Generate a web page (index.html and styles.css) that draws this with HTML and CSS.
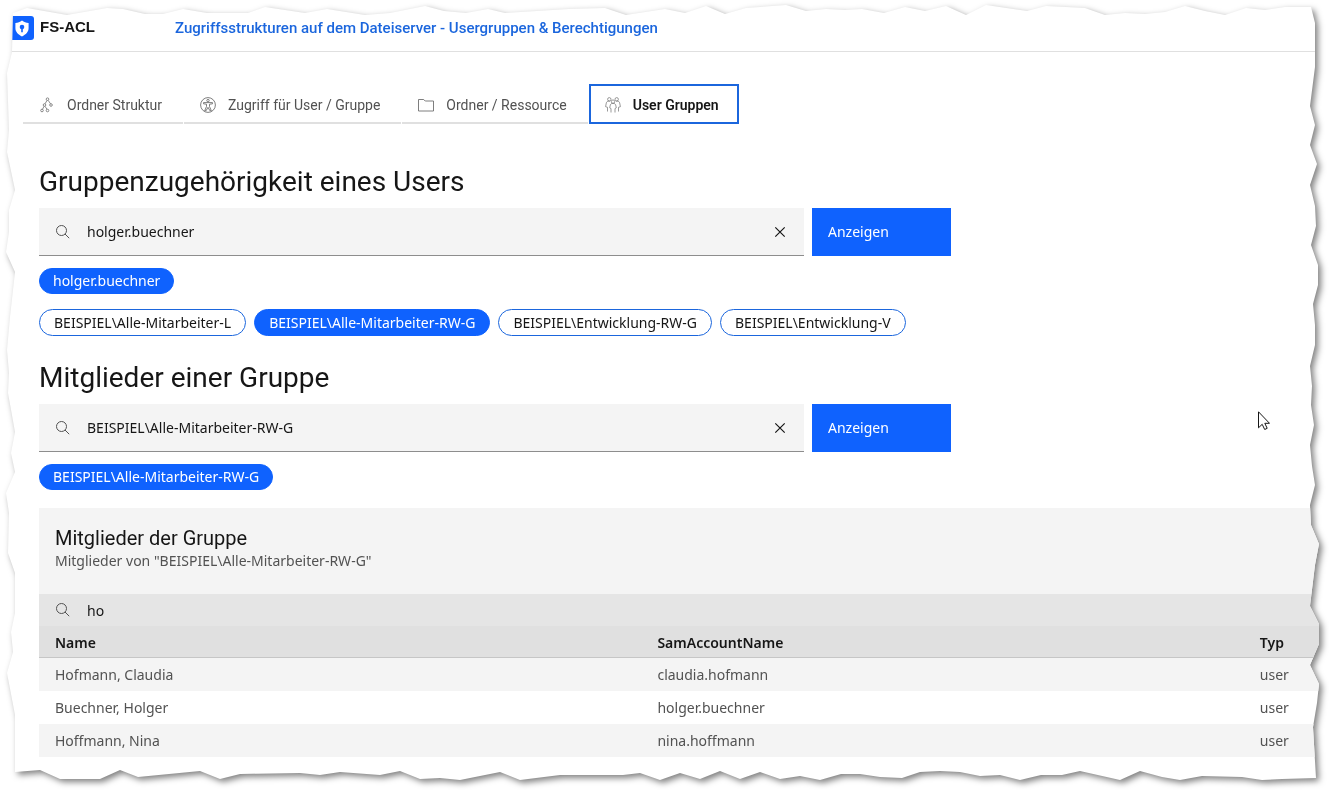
FILE: index.html
```
<!DOCTYPE html>
<html lang="de">
<head>
<meta charset="utf-8">
<title>FS-ACL</title>
<link rel="stylesheet" href="styles.css">
</head>
<body>
<div class="shadow">
<div class="sheet">
  <header class="topbar">
    <svg class="logo" viewBox="0 0 24 24" aria-hidden="true"><rect width="24" height="24" rx="3" fill="#0f62fe"/><path d="M12 4.500C10 6 8 6.700 5.400 6.900v5.200c0 3.800 2.600 6.600 6.600 8.400 4-1.800 6.600-4.600 6.600-8.400V6.900C16 6.700 14 6 12 4.500z" fill="#fff"/><circle cx="12" cy="11" r="2.300" fill="#0f62fe"/><path d="M11.200 11h1.600v5.200h-1.600z" fill="#0f62fe"/></svg>
    <span class="brand">FS-ACL</span>
    <a class="tagline" href="#">Zugriffsstrukturen auf dem Dateiserver - Usergruppen &amp; Berechtigungen</a>
  </header>
  <nav class="tabs">
    <button class="tab" type="button">
      <svg class="tab-icon" viewBox="0 0 16 16"><g fill="none" stroke="#6f6f6f" stroke-width=".8"><circle cx="8.500" cy="2.200" r="1.300"/><circle cx="5.500" cy="8" r="1.300"/><circle cx="12" cy="8" r="1.300"/><circle cx="3" cy="13.500" r="1.300"/><circle cx="8.500" cy="13.500" r="1.300"/><path d="M8 3.500 6 6.800M9.300 3.500l2.200 3.300M5 9.300l-1.500 3M6 9.300l2 3"/></g></svg>
      Ordner Struktur</button>
    <button class="tab" type="button">
      <svg class="tab-icon" viewBox="0 0 16 16"><g fill="none" stroke="#6f6f6f" stroke-width=".9"><circle cx="8" cy="8" r="7.400"/><circle cx="8" cy="3.600" r="1.200"/><path d="M3.500 5.600h9v1.200l-3 .4v2.300l1.800 4.200h-1.400L8 10.300l-1.900 3.400H4.700l1.800-4.200V7.200l-3-.4z"/></g></svg>
      Zugriff für User / Gruppe</button>
    <button class="tab" type="button">
      <svg class="tab-icon" viewBox="0 0 16 16"><path d="M.500 2.500h5.200l1.500 1.500h8.300v10H.500z" fill="none" stroke="#6f6f6f" stroke-width=".9"/></svg>
      Ordner / Ressource</button>
    <button class="tab tab-active" type="button">
      <svg class="tab-icon" viewBox="0 0 16 16"><g fill="none" stroke="#6f6f6f" stroke-width=".7"><circle cx="4.300" cy="2.300" r="1.700"/><circle cx="11.700" cy="2.300" r="1.700"/><circle cx="8" cy="4.600" r="1.700"/><path d="M6 15.500v-4L4.700 10.800 5.300 8c.3-1 1-1.500 2-1.500h1.400c1 0 1.700.5 2 1.500l.6 2.800-1.300.7v4M2.500 14.500v-4.200L.600 9.700 1.300 6c.3-1.200 1-1.800 2-1.800h1.500M13.500 14.500v-4.200l1.900-.6L14.700 6c-.3-1.200-1-1.800-2-1.800h-1.500"/></g></svg>
      User Gruppen</button>
  </nav>
  <main class="content">
    <section class="block">
      <h2 class="heading">Gruppenzugehörigkeit eines Users</h2>
      <form class="query">
        <div class="search">
          <svg class="glass" viewBox="0 0 16 16"><path d="M10 10 14.200 14.200" stroke="#525252"/><circle cx="6.500" cy="6.500" r="5" fill="none" stroke="#525252"/></svg>
          <input class="field" type="text" aria-label="User" value="holger.buechner">
          <button class="clear" type="button" aria-label="User löschen"><svg class="cross" viewBox="0 0 16 16"><path d="m3.300 3.300 9.400 9.400m0-9.400-9.400 9.400" stroke="#161616" stroke-width="1.200"/></svg></button>
        </div>
        <button class="submit" type="button">Anzeigen</button>
      </form>
      <div class="tags"><button class="tag tag-on" type="button">holger.buechner</button></div>
      <div class="tags tags-groups">
        <button class="tag" type="button">BEISPIEL\Alle-Mitarbeiter-L</button>
        <button class="tag tag-on" type="button">BEISPIEL\Alle-Mitarbeiter-RW-G</button>
        <button class="tag" type="button">BEISPIEL\Entwicklung-RW-G</button>
        <button class="tag" type="button">BEISPIEL\Entwicklung-V</button>
      </div>
    </section>
    <section class="block">
      <h2 class="heading">Mitglieder einer Gruppe</h2>
      <form class="query">
        <div class="search">
          <svg class="glass" viewBox="0 0 16 16"><path d="M10 10 14.200 14.200" stroke="#525252"/><circle cx="6.500" cy="6.500" r="5" fill="none" stroke="#525252"/></svg>
          <input class="field" type="text" aria-label="Gruppe" value="BEISPIEL\Alle-Mitarbeiter-RW-G">
          <button class="clear" type="button" aria-label="Gruppe löschen"><svg class="cross" viewBox="0 0 16 16"><path d="m3.300 3.300 9.400 9.400m0-9.400-9.400 9.400" stroke="#161616" stroke-width="1.200"/></svg></button>
        </div>
        <button class="submit" type="button">Anzeigen</button>
      </form>
      <div class="tags"><button class="tag tag-on" type="button">BEISPIEL\Alle-Mitarbeiter-RW-G</button></div>
    </section>
    <section class="members">
      <div class="members-head">
        <h3 class="members-title">Mitglieder der Gruppe</h3>
        <p class="members-note">Mitglieder von "BEISPIEL\Alle-Mitarbeiter-RW-G"</p>
      </div>
      <div class="search search-small">
        <svg class="glass" viewBox="0 0 16 16"><path d="M10 10 14.200 14.200" stroke="#525252"/><circle cx="6.500" cy="6.500" r="5" fill="none" stroke="#525252"/></svg>
        <input class="field" type="text" aria-label="Filter" value="ho">
      </div>
      <table class="grid">
        <thead><tr><th class="col-wide">Name</th><th class="col-wide">SamAccountName</th><th>Typ</th></tr></thead>
        <tbody>
          <tr><td>Hofmann, Claudia</td><td>claudia.hofmann</td><td>user</td></tr>
          <tr><td>Buechner, Holger</td><td>holger.buechner</td><td>user</td></tr>
          <tr><td>Hoffmann, Nina</td><td>nina.hoffmann</td><td>user</td></tr>
        </tbody>
      </table>
    </section>
  </main>
</div>
<svg class="pointer" viewBox="0 0 12 19"><path d="M.500.800v16l3.700-3.500 2.500 5.200 2.500-1.200-2.400-5h4.700z" fill="#fff" stroke="#161616"/></svg>
</div>
</body>
</html>
```
FILE: styles.css
```
* { box-sizing: border-box; }
body {
  margin: 0;
  background: #fff;
  color: #161616;
  font: 14px/18px "Noto Sans", "Open Sans", sans-serif;
}
button, input { font: inherit; color: inherit; border: 0; border-radius: 0; background: none; padding: 0; margin: 0; }
.shadow { position: relative; filter: drop-shadow(3px 3px 3px rgba(0, 0, 0, .5)); }
.sheet {
  min-height: 100vh;
  background: #fff;
  clip-path: polygon(
    13px 13px, 27px 8px, 67px 15px, 107px 8px, 123px 9px, 145px 14px, 163px 14px, 183px 9px, 207px 13px, 248px 13px, 265px 7px, 305px 13px, 327px 9px, 365px 15px, 390px 13px,
    425px 6px, 444px 11px, 466px 13px, 488px 9px, 505px 13px, 569px 9px, 605px 8px, 626px 15px, 665px 9px, 685px 13px, 706px 6px, 725px 14px, 746px 8px, 786px 5px, 806px 11px, 826px 9px, 845px 10px, 862px 9px, 884px 13px, 905px 7px, 925px 11px, 946px 6px, 966px 15px, 986px 5px, 1027px 11px, 1046px 6px, 1085px 8px, 1105px 15px, 1125px 13px, 1145px 14px, 1165px 12px, 1185px 6px, 1205px 11px, 1225px 15px,
    1246px 8px, 1265px 10px, 1285px 7px, calc(100% - 18px) 7px,
    calc(100% - 14px) 23px, calc(100% - 14px) 67px, calc(100% - 19px) 106px, calc(100% - 14px) 125px, calc(100% - 19px) 145px, calc(100% - 12px) 164px, calc(100% - 19px) 185px, calc(100% - 14px) 206px, calc(100% - 13px) 226px, calc(100% - 18px) 245px, calc(100% - 11px) 265px, calc(100% - 11px) 285px, calc(100% - 16px) 304px, calc(100% - 14px) 325px, calc(100% - 14px) 345px, calc(100% - 19px) 366px, calc(100% - 17px) 386px, calc(100% - 18px) 405px, calc(100% - 15px) 425px, calc(100% - 19px) 445px, calc(100% - 17px) 466px, calc(100% - 14px) 485px, calc(100% - 19px) 505px, calc(100% - 18px) 525px, calc(100% - 10px) 544px, calc(100% - 14px) 565px, calc(100% - 19px) 606px, calc(100% - 10px) 624px, calc(100% - 10px) 644px, calc(100% - 19px) 665px, calc(100% - 10px) 684px, calc(100% - 12px) 703px, calc(100% - 16px) 727px,
    calc(100% - 13px) calc(100% - 12px), 1282px calc(100% - 11px), 1262px calc(100% - 10px), 1242px calc(100% - 13px), 1202px calc(100% - 14px), 1180px calc(100% - 10px), 1162px calc(100% - 13px), 1140px calc(100% - 19px), 1120px calc(100% - 10px), 1080px calc(100% - 19px), 1062px calc(100% - 15px), 1041px calc(100% - 15px), 1020px calc(100% - 10px), 1000px calc(100% - 15px), 980px calc(100% - 14px), 960px calc(100% - 18px), 940px calc(100% - 19px), 920px calc(100% - 18px), 902px calc(100% - 12px), 880px calc(100% - 13px), 860px calc(100% - 16px), 841px calc(100% - 16px), 820px calc(100% - 10px), 800px calc(100% - 14px), 780px calc(100% - 11px), 760px calc(100% - 18px), 740px calc(100% - 11px), 720px calc(100% - 19px), 700px calc(100% - 11px), 680px calc(100% - 17px), 660px calc(100% - 10px), 640px calc(100% - 17px), 623px calc(100% - 15px), 560px calc(100% - 15px), 520px calc(100% - 10px), 500px calc(100% - 18px), 460px calc(100% - 10px), 440px calc(100% - 12px), 420px calc(100% - 11px), 400px calc(100% - 19px), 380px calc(100% - 15px), 340px calc(100% - 18px), 320px calc(100% - 15px), 300px calc(100% - 17px), 240px calc(100% - 16px), 220px calc(100% - 11px), 200px calc(100% - 19px), 138px calc(100% - 13px), 120px calc(100% - 20px), 100px calc(100% - 11px), 60px calc(100% - 11px), 40px calc(100% - 20px), 15px calc(100% - 18px),
    15px 715px, 7px 673px, 13px 652px, 11px 632px, 15px 613px, 15px 573px, 8px 553px, 9px 513px, 6px 493px, 15px 472px, 11px 453px, 15px 432px, 8px 393px, 9px 373px, 7px 350px, 10px 317px, 15px 272px, 6px 252px, 9px 232px, 9px 210px, 15px 190px, 7px 152px, 9px 130px, 7px 73px, 12px 52px
  );
}
.topbar { display: flex; align-items: center; height: 52px; padding: 4px 0 0 10px; border-bottom: 1px solid #e0e0e0; }
.logo { width: 24px; height: 24px; }
.brand { width: 135px; margin-left: 6px; padding-bottom: 2px; font: bold 15px/18px "Liberation Sans", sans-serif; }
.tagline { color: #1b66dd; font-family: Roboto, sans-serif; font-size: 15px; font-weight: 500; text-decoration: none; }
.tabs { display: flex; gap: 1px; padding: 32px 23px 0; font-family: Roboto, sans-serif; }
.tab { display: flex; align-items: center; gap: 12px; height: 40px; padding: 3px 21px 0 16px; border-bottom: 2px solid #e0e0e0; color: #525252; }
.tab-icon { width: 16px; height: 16px; }
.tab-active { padding: 1px 18px 0 14px; border: 2px solid #1b66dd; color: #161616; font-weight: 600; }
.content { padding: 40px 0 0 39px; }
.block { margin-bottom: 24px; }
.block:nth-of-type(2) { margin-bottom: 18px; }
.heading { margin: 0 0 8px; font-family: Roboto, sans-serif; font-size: 28px; font-weight: 400; line-height: 36px; }
.query { display: grid; grid-template-columns: 1fr 139px; gap: 8px; max-width: 912px; }
.search { display: flex; align-items: center; height: 48px; padding: 0 16px; background: #f4f4f4; border-bottom: 1px solid #8d8d8d; }
.glass, .cross { display: block; width: 16px; height: 16px; }
.field { flex: 1; height: 30px; min-width: 0; margin-left: 16px; outline: 0; }
.submit { padding-left: 16px; background: #0f62fe; color: #fff; text-align: left; }
.tags { display: flex; flex-wrap: wrap; gap: 8px; margin-top: 12px; }
.tags-groups { margin-top: 15px; }
.tag { height: 26px; padding: 0 13px; border: 1px solid #1b66dd; border-radius: 14px; color: #161616; }
.tags-groups .tag { height: 27px; padding: 0 14px; }
.tag-on, .tags-groups .tag-on { background: #0f62fe; border-color: #0f62fe; color: #fff; }
.members-head { height: 86px; padding: 16px 16px 0; background: #f4f4f4; }
.members-title { margin: 0; font-family: Roboto, sans-serif; font-size: 20px; font-weight: 400; line-height: 28px; }
.members-note { margin: 0; color: #525252; }
.search-small { height: 32px; background: #e5e5e5; border: 0; }
.grid { width: 100%; table-layout: fixed; border-spacing: 0; }
.grid th, .grid td { height: 33px; padding: 0 0 0 16px; text-align: left; }
.grid th { height: 32px; padding-top: 2px; background: #e0e0e0; border-bottom: 1px solid #c6c6c6; font-weight: 600; }
.grid td { color: #525252; }
.grid tbody tr:nth-child(odd) { background: #f4f4f4; }
.col-wide { width: 46.7%; }
.pointer { position: absolute; left: 1258px; top: 411px; width: 12px; height: 19px; }
```
